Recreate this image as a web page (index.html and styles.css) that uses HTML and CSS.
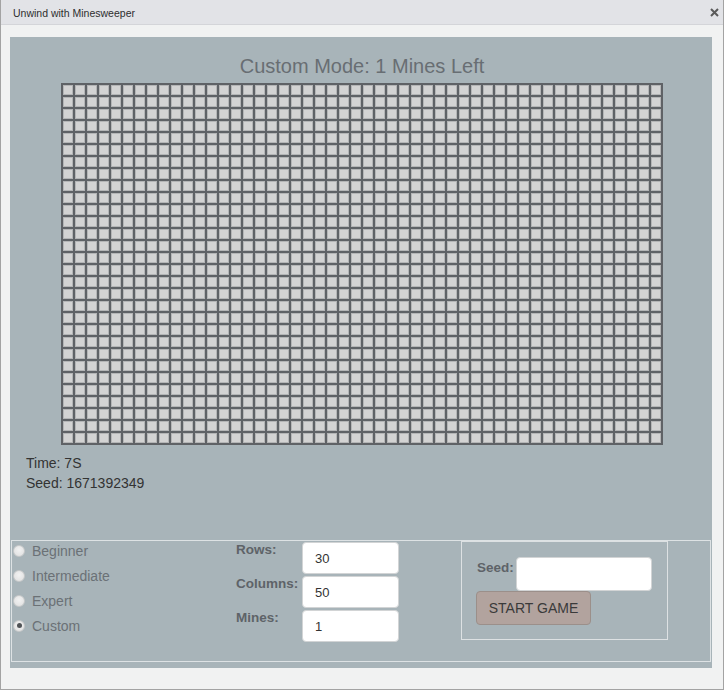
FILE: index.html
```html
<!DOCTYPE html>
<html lang="en">
<head>
<meta charset="utf-8">
<title>Unwind with Minesweeper</title>
<link rel="stylesheet" href="styles.css">
</head>
<body>
<div class="window">
  <div class="titlebar">
    <span class="titlebar-text">Unwind with Minesweeper</span>
    <svg class="close" width="9" height="9" viewBox="0 0 9 9" aria-hidden="true">
      <path d="M1 1 L8 8 M8 1 L1 8" stroke="#5a5a5a" stroke-width="2" fill="none"/>
    </svg>
  </div>
  <div class="content">
    <div class="panel">
      <h1 class="mode-title">Custom Mode: 1 Mines Left</h1>
      <div class="board" id="board"></div>
      <div class="stats">
        <div>Time: 7S</div>
        <div>Seed: 1671392349</div>
      </div>
      <div class="controls">
        <div class="modes">
          <label class="mode-row"><input type="radio" name="mode" class="radio"><span>Beginner</span></label>
          <label class="mode-row"><input type="radio" name="mode" class="radio"><span>Intermediate</span></label>
          <label class="mode-row"><input type="radio" name="mode" class="radio"><span>Expert</span></label>
          <label class="mode-row"><input type="radio" name="mode" class="radio" checked><span>Custom</span></label>
        </div>
        <div class="custom-fields">
          <label class="field-label">Rows:</label>
          <input class="field-input" type="text" value="30">
          <label class="field-label">Columns:</label>
          <input class="field-input" type="text" value="50">
          <label class="field-label">Mines:</label>
          <input class="field-input" type="text" value="1">
        </div>
        <div class="start-box">
          <div class="seed-row">
            <label class="field-label seed-label">Seed:</label>
            <input class="seed-input" type="text" value="">
          </div>
          <button class="start-btn" type="button">START GAME</button>
        </div>
      </div>
    </div>
  </div>
</div>
<script src="script.js"></script>
</body>
</html>
```

FILE: styles.css
```css
* { box-sizing: border-box; }

html, body {
  margin: 0;
  padding: 0;
}

body {
  font-family: "Liberation Sans", Arial, sans-serif;
  background: #f1f2f2;
}

.window {
  width: 724px;
  height: 690px;
  border: 1px solid #a3a3a3;
  border-top: none;
  background: #f1f2f2;
  overflow: hidden;
}

.titlebar {
  height: 25px;
  background: #e2e3e7;
  border-bottom: 1px solid #d4d5d9;
  display: flex;
  align-items: center;
  justify-content: space-between;
  padding: 0 4px 0 12px;
}

.titlebar-text {
  font-size: 10.5px;
  color: #2e2e2e;
  margin-top: 1px;
}

.close {
  display: block;
}

.content {
  padding: 12px 0 0 9px;
}

.panel {
  width: 702px;
  height: 631px;
  background: #a8b4b9;
  padding-top: 17px;
}

.mode-title {
  margin: 0;
  text-align: center;
  font-size: 20px;
  line-height: 24px;
  font-weight: normal;
  color: #686e73;
  padding-left: 2px;
}

.board {
  width: 602px;
  height: 362px;
  margin: 5px 0 0 51px;
  padding: 1px;
  background: #5f6266;
  display: grid;
  grid-template-columns: repeat(50, 12px);
  grid-template-rows: repeat(30, 12px);
}

.cell {
  margin: 1px;
  width: 10px;
  height: 10px;
  background: #d3d3d3;
  box-shadow: inset 0 0 0 1px #b4b5b6;
}

.stats {
  margin-top: 8px;
  padding-left: 16px;
  font-size: 14px;
  line-height: 20px;
  color: #333;
}

.controls {
  margin: 47px 1px 0 1px;
  height: 122px;
  border: 1px solid #dde2e4;
  display: flex;
  align-items: flex-start;
}

.modes {
  width: 224px;
  margin-top: -3px;
}

.mode-row {
  display: flex;
  align-items: center;
  height: 25px;
  font-size: 14px;
  color: #6b7176;
}

.radio {
  appearance: none;
  -webkit-appearance: none;
  width: 12px;
  height: 12px;
  margin: 0 7px 0 1px;
  border-radius: 50%;
  border: 1px solid #c6c8c9;
  background: radial-gradient(circle at 50% 40%, #f2f2f2 0%, #dedede 100%);
  position: relative;
}

.radio:checked::after {
  content: "";
  position: absolute;
  left: 2.5px;
  top: 2.5px;
  width: 5px;
  height: 5px;
  border-radius: 50%;
  background: #505356;
}

.custom-fields {
  display: grid;
  grid-template-columns: 66px 97px;
  row-gap: 2px;
  margin-top: 1px;
}

.field-label {
  font-size: 13.5px;
  font-weight: bold;
  line-height: 16px;
  color: #5e6368;
  align-self: start;
}

.field-input {
  width: 97px;
  height: 32px;
  border: 1px solid #d2d4d5;
  border-radius: 4px;
  background: #fff;
  padding: 0 12px;
  font-family: "Liberation Sans", Arial, sans-serif;
  font-size: 13px;
  color: #333;
  outline: none;
}

.start-box {
  margin-left: 62px;
  width: 207px;
  height: 99px;
  border: 1px solid #dde1e3;
  padding: 15px 0 0 15px;
}

.seed-row {
  display: flex;
  align-items: flex-start;
}

.seed-label {
  margin-top: 3px;
  margin-right: 2px;
}

.seed-input {
  width: 136px;
  height: 34px;
  border: 1px solid #d2d4d5;
  border-radius: 4px;
  background: #fff;
  outline: none;
}

.start-btn {
  display: block;
  margin-left: -1px;
  width: 115px;
  height: 34px;
  padding: 0;
  background: #b2a39e;
  border: 1px solid #9b8f8a;
  border-radius: 4px;
  font-family: "Liberation Sans", Arial, sans-serif;
  font-size: 14px;
  color: #3a3a3a;
}
```

FILE: script.js
```js
(function () {
  var board = document.getElementById('board');
  var rows = 30, cols = 50;
  var frag = document.createDocumentFragment();
  for (var i = 0; i < rows * cols; i++) {
    var c = document.createElement('div');
    c.className = 'cell';
    frag.appendChild(c);
  }
  board.appendChild(frag);
})();
```
